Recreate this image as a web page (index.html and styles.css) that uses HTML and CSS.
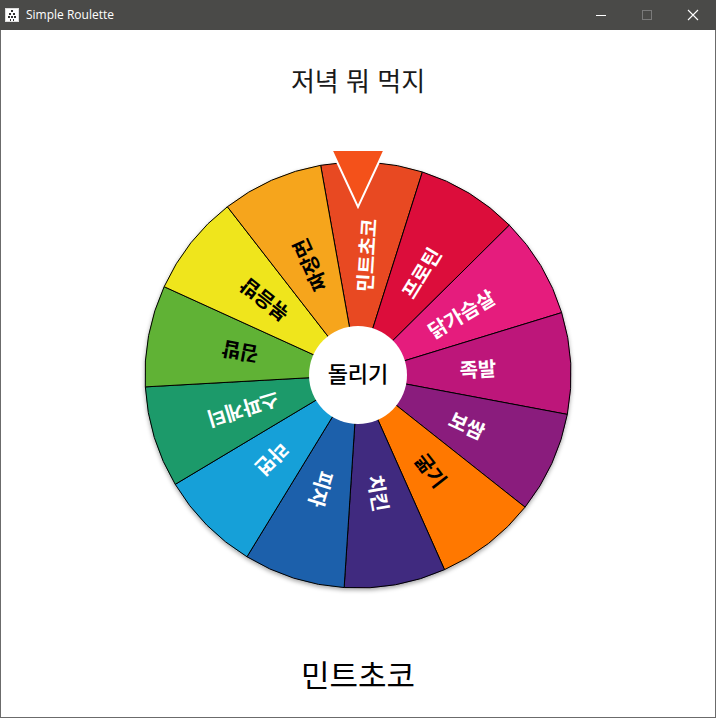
FILE: index.html
```html
<!DOCTYPE html>
<html lang="ko">
<head>
<meta charset="utf-8">
<title>Simple Roulette</title>
<link rel="stylesheet" href="styles.css">
</head>
<body>
<div class="window">
  <header class="titlebar">
    <div class="app">
      <svg class="app-icon" width="14" height="14" viewBox="0 0 14 14">
        <rect x="0.5" y="0.5" width="13" height="13" fill="#fff" stroke="#ddd"/>
        <rect x="6" y="2" width="2" height="2" fill="#333"/>
        <rect x="4" y="5" width="2" height="2" fill="#333"/>
        <rect x="8" y="5" width="2" height="2" fill="#333"/>
        <rect x="3" y="8" width="2" height="2" fill="#333"/>
        <rect x="6" y="8" width="2" height="2" fill="#333"/>
        <rect x="9" y="8" width="2" height="2" fill="#333"/>
        <rect x="5" y="11" width="1" height="2" fill="#333"/>
        <rect x="8" y="11" width="1" height="2" fill="#333"/>
      </svg>
      <span class="app-title">Simple Roulette</span>
    </div>
    <div class="controls">
      <svg class="ctl" width="46" height="30" viewBox="0 0 46 30"><line x1="18" y1="15.5" x2="28" y2="15.5" stroke="#fff" stroke-width="1"/></svg>
      <svg class="ctl" width="46" height="30" viewBox="0 0 46 30"><rect x="18.5" y="10.5" width="9" height="9" fill="none" stroke="#7a7a7a" stroke-width="1"/></svg>
      <svg class="ctl" width="46" height="30" viewBox="0 0 46 30"><path d="M18 10 L28 20 M28 10 L18 20" stroke="#fff" stroke-width="1.1"/></svg>
    </div>
  </header>
  <main class="content">
    <h1 class="question">저녁 뭐 먹지</h1>
    <svg class="wheel" width="460" height="460" viewBox="0 0 460 460">
      <defs>
        <filter id="shadow" x="-10%" y="-10%" width="120%" height="120%">
          <feDropShadow dx="0" dy="2" stdDeviation="2" flood-color="#000" flood-opacity="0.35"/>
        </filter>
      </defs>
      <g filter="url(#shadow)" stroke="#000" stroke-width="1">
        <path fill="#E84A21" d="M230 230 L192.65 20.30 A213 213 0 0 1 294.36 26.96 Z"/>
        <path fill="#DC0B3B" d="M230 230 L294.36 26.96 A213 213 0 0 1 381.35 80.13 Z"/>
        <path fill="#E51A7D" d="M230 230 L381.35 80.13 A213 213 0 0 1 433.66 167.62 Z"/>
        <path fill="#BD127A" d="M230 230 L433.66 167.62 A213 213 0 0 1 439.32 269.40 Z"/>
        <path fill="#8A1F7D" d="M230 230 L439.32 269.40 A213 213 0 0 1 397.05 362.16 Z"/>
        <path fill="#FF7800" d="M230 230 L397.05 362.16 A213 213 0 0 1 316.50 424.65 Z"/>
        <path fill="#3F2A7F" d="M230 230 L316.50 424.65 A213 213 0 0 1 216.14 442.55 Z"/>
        <path fill="#1E60AB" d="M230 230 L216.14 442.55 A213 213 0 0 1 118.97 411.77 Z"/>
        <path fill="#18A0D8" d="M230 230 L118.97 411.77 A213 213 0 0 1 47.22 339.35 Z"/>
        <path fill="#1F9A6A" d="M230 230 L47.22 339.35 A213 213 0 0 1 17.33 241.89 Z"/>
        <path fill="#61B236" d="M230 230 L17.33 241.89 A213 213 0 0 1 36.15 141.70 Z"/>
        <path fill="#EFE51F" d="M230 230 L36.15 141.70 A213 213 0 0 1 99.39 61.74 Z"/>
        <path fill="#F6A51A" d="M230 230 L99.39 61.74 A213 213 0 0 1 192.65 20.30 Z"/>
      </g>
      <g class="labels">
        <text class="lbl light" transform="translate(230 230) rotate(-86.25)" x="120" y="0">민트초코</text>
        <text class="lbl light" transform="translate(230 230) rotate(-58.56)" x="120" y="0">프로틴</text>
        <text class="lbl light" transform="translate(230 230) rotate(-30.87)" x="120" y="0">닭가슴살</text>
        <text class="lbl light" transform="translate(230 230) rotate(-3.18)" x="120" y="0">족발</text>
        <text class="lbl light" transform="translate(230 230) rotate(24.51)" x="120" y="0">보쌈</text>
        <text class="lbl dark" transform="translate(230 230) rotate(52.20)" x="120" y="0">굶기</text>
        <text class="lbl light" transform="translate(230 230) rotate(79.89)" x="120" y="0">치킨</text>
        <text class="lbl light" transform="translate(230 230) rotate(107.58)" x="120" y="0">피자</text>
        <text class="lbl light" transform="translate(230 230) rotate(135.27)" x="120" y="0">라면</text>
        <text class="lbl light" transform="translate(230 230) rotate(162.96)" x="120" y="0">스파게티</text>
        <text class="lbl dark" transform="translate(230 230) rotate(190.65)" x="120" y="0">김밥</text>
        <text class="lbl dark" transform="translate(230 230) rotate(218.34)" x="120" y="0">볶음밥</text>
        <text class="lbl dark" transform="translate(230 230) rotate(246.03)" x="120" y="0">짜장면</text>
      </g>
      <circle cx="230" cy="230" r="49" fill="#fff"/>
      <text class="spin" x="230" y="227">돌리기</text>
      <polygon points="204,6 256,6 230,63" fill="#F4511A"/>
      <polyline points="204,6 230,62 256,6" fill="none" stroke="#fff" stroke-width="2"/>
    </svg>
    <div class="result">민트초코</div>
  </main>
</div>
</body>
</html>
```

FILE: styles.css
```css
html, body {
  margin: 0;
  padding: 0;
  background: #fff;
}

body {
  width: 716px;
  height: 718px;
  overflow: hidden;
  font-family: "Noto Sans CJK KR", "Noto Sans", sans-serif;
}

.window {
  box-sizing: border-box;
  width: 716px;
  height: 718px;
  display: flex;
  flex-direction: column;
  border-left: 1px solid #6b6b6b;
  border-right: 1px solid #6b6b6b;
  border-bottom: 1px solid #6b6b6b;
}

.titlebar {
  height: 30px;
  flex: none;
  background: #4a4a48;
  display: flex;
  align-items: center;
  justify-content: space-between;
  margin: 0 -1px;
}

.app {
  display: flex;
  align-items: center;
  gap: 7px;
  padding-left: 5px;
}

.app-icon {
  display: block;
}

.app-title {
  color: #fff;
  font-family: "Open Sans", "Noto Sans", sans-serif;
  font-size: 12px;
  line-height: 16px;
}

.controls {
  display: flex;
}

.ctl {
  display: block;
}

.content {
  flex: 1;
  display: flex;
  flex-direction: column;
  align-items: center;
}

.question {
  margin: 32px 0 0;
  font-size: 26px;
  line-height: 36px;
  font-weight: 400;
  color: #1a1a1a;
}

.wheel {
  display: block;
  margin-top: 47px;
}

.lbl {
  font-family: "Noto Sans CJK KR", sans-serif;
  font-size: 20px;
  font-weight: 700;
  text-anchor: middle;
  dominant-baseline: central;
}

.lbl.light {
  fill: #fff;
}

.lbl.dark {
  fill: #000;
}

.spin {
  font-family: "Noto Sans CJK KR", sans-serif;
  font-size: 22px;
  font-weight: 500;
  fill: #000;
  text-anchor: middle;
  dominant-baseline: central;
}

.result {
  margin-top: 49px;
  font-size: 31px;
  line-height: 40px;
  font-weight: 400;
  color: #000;
}
```
